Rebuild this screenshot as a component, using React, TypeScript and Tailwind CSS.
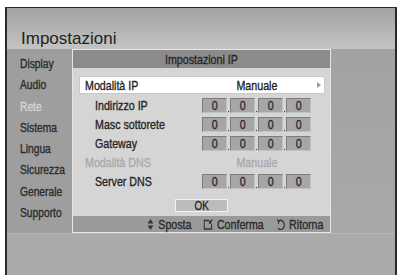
import React from 'react';

const sans = "font-['Liberation_Sans',Arial,sans-serif]";

const menuItems = ['Display', 'Audio', 'Rete', 'Sistema', 'Lingua', 'Sicurezza', 'Generale', 'Supporto'];

// Arial squeezed horizontally and thickened a little, standing in for the condensed TV font
function Narrow({ children, origin = 'origin-left' }: { children: React.ReactNode; origin?: string }) {
  return (
    <span className={`inline-block whitespace-nowrap scale-x-[0.82] [-webkit-text-stroke:0.35px_currentColor] ${origin}`}>
      {children}
    </span>
  );
}

function IpBoxes() {
  return (
    <div className="flex items-end">
      {[0, 1, 2, 3].map((i) => (
        <React.Fragment key={i}>
          {i > 0 && (
            <div className="w-[3px] h-[15px] flex items-end justify-center">
              <div className="w-[1px] h-[1px] bg-[#333] mb-[1px]" />
            </div>
          )}
          <div className="w-[25px] h-[15px] bg-[#a6a6a6] border border-t-[#7c7c7c] border-l-[#7c7c7c] border-b-[#c2c2c2] border-r-[#c2c2c2] flex items-center justify-center text-[13px] leading-none text-[#2a2a2a]">
            <Narrow origin="origin-center">0</Narrow>
          </div>
        </React.Fragment>
      ))}
    </div>
  );
}

function Row({
  label,
  indent = true,
  disabled = false,
  children,
}: {
  label: string;
  indent?: boolean;
  disabled?: boolean;
  children: React.ReactNode;
}) {
  return (
    <div className="h-[19px] flex items-center ml-[7px] mr-[6px]">
      <div
        className={`w-[122px] text-[13px] leading-none ${indent ? 'pl-[15px]' : 'pl-[5px]'} ${
          disabled ? 'text-[#a9a9a9]' : 'text-[#262626]'
        }`}
      >
        <Narrow>{label}</Narrow>
      </div>
      {children}
    </div>
  );
}

export default function App() {
  return (
    <div className={`w-[401px] h-[275px] bg-white overflow-hidden pt-[7px] pl-[5px] ${sans}`}>
      <div className="w-[392px] h-[268px] border-l-2 border-r-2 border-t border-[#2a2a2a] flex flex-col">
        {/* Header */}
        <div className="h-[41px] bg-gradient-to-b from-[#a3a3a3] to-[#c4c4c4] pl-[14px] pt-[22px]">
          <div className="text-[17px] leading-[17px] text-[#222]">Impostazioni</div>
        </div>

        {/* Middle */}
        <div className="h-[184px] flex">
          <div className="w-[65px] bg-[#9e9e9e] pt-[5px] pl-[13px]">
            {menuItems.map((item) => (
              <div
                key={item}
                className={`h-[21.3px] leading-[21.3px] text-[12.5px] ${
                  item === 'Rete' ? 'text-[#d6d6d6]' : 'text-[#2b2b2b]'
                }`}
              >
                <Narrow>{item}</Narrow>
              </div>
            ))}
          </div>

          {/* Dialog */}
          <div className="w-[259px] h-full border border-[#e6e6e6] flex flex-col">
            <div className="h-[18px] bg-[#8b8b8b] flex items-center justify-center text-[13px] leading-none text-[#262626]">
              <Narrow origin="origin-center">Impostazioni IP</Narrow>
            </div>
            <div className="h-[148px] bg-[#d5d5d5] pt-[9px]">
              <div className="h-[16px] ml-[7px] mr-[6px] bg-white shadow-[0_0_1px_#888] flex items-center">
                <div className="w-[122px] pl-[5px] text-[13px] leading-none text-[#1f1f1f]">
                  <Narrow>Modalità IP</Narrow>
                </div>
                <div className="w-[110px] text-center text-[13px] leading-none text-[#1f1f1f]">
                  <Narrow origin="origin-center">Manuale</Narrow>
                </div>
                <div className="flex-1 flex justify-end pr-[3px]">
                  <svg width="4" height="6" viewBox="0 0 4 6">
                    <path d="M0 0 L4 3 L0 6 Z" fill="#9a9a9a" />
                  </svg>
                </div>
              </div>
              <div className="h-[3px]" />
              <Row label="Indirizzo IP">
                <IpBoxes />
              </Row>
              <Row label="Masc sottorete">
                <IpBoxes />
              </Row>
              <Row label="Gateway">
                <IpBoxes />
              </Row>
              <Row label="Modalità DNS" indent={false} disabled>
                <div className="w-[110px] text-center text-[13px] leading-none text-[#a9a9a9]">
                  <Narrow origin="origin-center">Manuale</Narrow>
                </div>
              </Row>
              <Row label="Server DNS">
                <IpBoxes />
              </Row>
              <div className="mt-[8px] mx-auto w-[53px] h-[13px] bg-[#bcbcbc] border border-[#f2f2f2] flex items-center justify-center text-[12px] leading-none text-[#262626]">
                <Narrow origin="origin-center">OK</Narrow>
              </div>
            </div>
            <div className="flex-1 bg-[#9a9a9a] flex items-center justify-end pr-[7px] text-[13px] leading-none text-[#2a2a2a]">
              <div className="flex items-center gap-[15px] scale-x-[0.82] origin-right [-webkit-text-stroke:0.35px_currentColor]">
                <div className="flex items-center gap-[6px]">
                  <svg width="7" height="11" viewBox="0 0 7 11">
                    <path d="M3.5 0 L7 4.5 L0 4.5 Z M0 6.5 L7 6.5 L3.5 11 Z" fill="#333" />
                  </svg>
                  <span>Sposta</span>
                </div>
                <div className="flex items-center gap-[4px]">
                  <svg width="12" height="11" viewBox="0 0 12 11" fill="none" stroke="#333" strokeWidth="1.4">
                    <path d="M7 1.5 H1 V10 H10 V5.5" />
                    <path d="M11 0.5 L7.5 4 M7.5 1.8 V4 H9.8" />
                  </svg>
                  <span>Conferma</span>
                </div>
                <div className="flex items-center gap-[5px]">
                  <svg width="11" height="11" viewBox="0 0 11 11" fill="none" stroke="#333" strokeWidth="1.4">
                    <path d="M3 2 A4.5 4.5 0 1 1 2 9.3" />
                    <path d="M0.7 0.8 L3.3 2 L2.3 4.7" />
                  </svg>
                  <span>Ritorna</span>
                </div>
              </div>
            </div>
          </div>

          <div className="flex-1 bg-gradient-to-b from-[#a2a2a2] to-[#a9a9a9]" />
        </div>

        {/* Bottom */}
        <div className="flex-1 bg-[#aaaaaa] border-t border-[#b8b8b8]" />
      </div>
    </div>
  );
}
